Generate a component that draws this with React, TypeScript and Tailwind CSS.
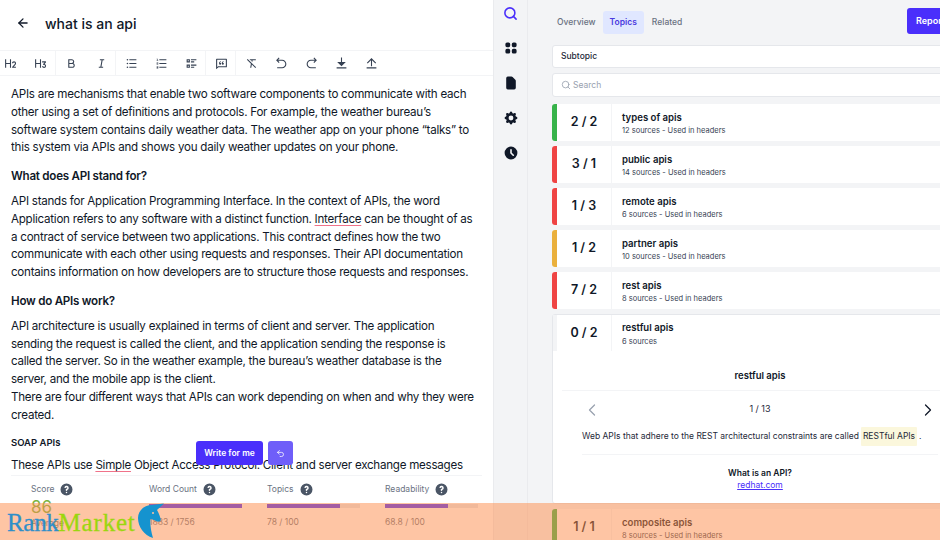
import { ArrowLeft, ChevronLeft, ChevronRight, Search, Undo2 } from 'lucide-react';
import { HiClock, HiCog, HiDocument, HiQuestionMarkCircle, HiViewGrid } from 'react-icons/hi';
import {
  RiArrowGoBackLine,
  RiArrowGoForwardLine,
  RiBold,
  RiChatQuoteLine,
  RiDownloadFill,
  RiFormatClear,
  RiH2,
  RiH3,
  RiItalic,
  RiListCheck2,
  RiListOrdered,
  RiListUnordered,
  RiUploadLine,
} from 'react-icons/ri';

const topics = [
  { score: '2 / 2', title: 'types of apis', meta: '12 sources - Used in headers', bar: 'bg-[#37b34a]' },
  { score: '3 / 1', title: 'public apis', meta: '14 sources - Used in headers', bar: 'bg-[#ef4444]' },
  { score: '1 / 3', title: 'remote apis', meta: '6 sources - Used in headers', bar: 'bg-[#ef4444]' },
  { score: '1 / 2', title: 'partner apis', meta: '10 sources - Used in headers', bar: 'bg-[#eab03c]' },
  { score: '7 / 2', title: 'rest apis', meta: '8 sources - Used in headers', bar: 'bg-[#ef4444]' },
];

const stats = [
  { label: 'Word Count', value: '1883 / 1756', fill: 'w-full' },
  { label: 'Topics', value: '78 / 100', fill: 'w-[78%]' },
  { label: 'Readability', value: '68.8 / 100', fill: 'w-[68%]' },
];

function TopicRow({ score, title, meta, bar }: { score: string; title: string; meta: string; bar: string }) {
  return (
    <div className="flex h-[37px] shrink-0 overflow-hidden rounded-l-[3px] bg-white">
      <div className={`w-[5px] shrink-0 ${bar}`} />
      <div className="flex w-[55px] shrink-0 items-center justify-center border-r border-gray-100 text-[12.5px] font-semibold text-gray-900">
        {score}
      </div>
      <div className="pl-[10px] pt-[7px]">
        <div className="text-[9.6px] leading-[13px] font-semibold text-gray-900">{title}</div>
        <div className="text-[7.5px] leading-[13px] text-gray-700">{meta}</div>
      </div>
    </div>
  );
}

function Unicorn() {
  return (
    <svg viewBox="5 2 30 37" className="-mt-[2px] ml-[1px] h-[37px] w-[30px]">
      <path
        d="M6 18 C6 10 13 5 20 5 L32 3.5 L25 10 C27 13 28 17 29 20 C28 22 26 22 24 21 C22 20 20 19 18.5 19 C18 25 19 31 21 38 C12 35 6 27 6 18 Z"
        fill="#1593cf"
      />
      <circle cx="21" cy="13" r="1" fill="#fec3a0" />
    </svg>
  );
}

export default function App() {
  return (
    <div className="relative flex h-[540px] w-[940px] overflow-hidden bg-white font-['Inter',sans-serif]">
      {/* Editor */}
      <div className="relative flex w-[493px] shrink-0 flex-col">
        <div className="flex h-[50px] shrink-0 items-center gap-[15px] pb-[4px] pl-[16px]">
          <ArrowLeft className="size-[14px] text-gray-900" strokeWidth={2.2} />
          <h1 className="text-[14px] font-medium text-gray-900">what is an api</h1>
        </div>

        <div className="flex h-[26px] shrink-0 items-center border-y border-gray-100 text-gray-700">
          <div className="flex h-full items-center gap-[17px] border-r border-gray-100 pl-[3.5px] pr-[8.5px]">
            <RiH2 className="size-[13px]" />
            <RiH3 className="size-[13px]" />
          </div>
          <div className="flex h-full items-center gap-[17px] border-r border-gray-100 pl-[8.5px] pr-[7.5px]">
            <RiBold className="size-[13px]" />
            <RiItalic className="size-[13px]" />
          </div>
          <div className="flex h-full items-center gap-[17px] border-r border-gray-100 pl-[8.5px] pr-[7.5px]">
            <RiListUnordered className="size-[13px]" />
            <RiListOrdered className="size-[13px]" />
            <RiListCheck2 className="size-[13px]" />
          </div>
          <div className="flex h-full items-center border-r border-gray-100 pl-[8.5px] pr-[7.5px]">
            <RiChatQuoteLine className="size-[13px]" />
          </div>
          <div className="flex h-full items-center gap-[17px] pl-[8.5px]">
            <RiFormatClear className="size-[13px]" />
            <RiArrowGoBackLine className="size-[13px]" />
            <RiArrowGoForwardLine className="size-[13px]" />
            <RiDownloadFill className="size-[13px]" />
            <RiUploadLine className="size-[13px]" />
          </div>
        </div>

        <div className="ml-[11px] mr-[16px] flex-1 overflow-hidden pt-[10px] text-[11.6px] leading-[17.8px] tracking-[-0.25px] text-gray-900">
          <p>
            APIs are mechanisms that enable two software components to communicate with each other using a set of
            definitions and protocols. For example, the weather bureau’s software system contains daily weather data.
            The weather app on your phone “talks” to this system via APIs and shows you daily weather updates on your
            phone.
          </p>
          <h2 className="mt-[11px] font-semibold">What does API stand for?</h2>
          <p className="mt-[7px]">
            API stands for Application Programming Interface. In the context of APIs, the word Application refers to any
            software with a distinct function.{' '}
            <span className="underline decoration-[#f0728a] underline-offset-2">Interface</span> can be thought of as a
            contract of service between two applications. This contract defines how the two communicate with each other
            using requests and responses. Their API documentation contains information on how developers are to structure
            those requests and responses.
          </p>
          <h2 className="mt-[11px] font-semibold">How do APIs work?</h2>
          <p className="mt-[7px]">
            API architecture is usually explained in terms of client and server. The application sending the request is
            called the client, and the application sending the response is called the server. So in the weather example,
            the bureau’s weather database is the server, and the mobile app is the client.
          </p>
          <p>There are four different ways that APIs can work depending on when and why they were created.</p>
          <h3 className="mt-[9px] text-[9.5px] font-semibold tracking-normal">SOAP APIs</h3>
          <p className="mt-[6px]">
            These APIs use <span className="underline decoration-[#f0728a] underline-offset-2">Simple</span> Object Access
            Protocol. Client and server exchange messages
          </p>
        </div>

        <div className="absolute left-[196px] top-[441px] flex gap-[5px]">
          <button className="h-[24px] w-[67px] rounded-[3px] bg-[#4a2ffb] text-[8.5px] font-semibold text-white">
            Write for me
          </button>
          <button className="flex h-[24px] w-[25px] items-center justify-center rounded-[3px] bg-[#6f5ef9] text-white">
            <Undo2 className="size-[9px]" />
          </button>
        </div>

        <div className="mx-[11px] flex h-[65px] shrink-0 gap-[25px] border-t border-gray-100 bg-white pl-[20px] pt-[6px] text-[8.5px] text-gray-500">
          <div className="w-[93px]">
            <div className="flex items-center gap-[5px]">
              Score <HiQuestionMarkCircle className="size-[15px] text-gray-600" />
            </div>
            <div className="mt-[1px] text-[17px] leading-[18px] text-[#7cb342]">86</div>
            <div className="pt-[1px]">Average</div>
          </div>
          {stats.map((s) => (
            <div key={s.label} className="w-[93px]">
              <div className="flex items-center gap-[5px]">
                {s.label} <HiQuestionMarkCircle className="size-[15px] text-gray-600" />
              </div>
              <div className="mt-[7px] h-[3.5px] w-full bg-gray-200">
                <div className={`h-full bg-[#4a2ffb] ${s.fill}`} />
              </div>
              <div className="mt-[8px]">{s.value}</div>
            </div>
          ))}
        </div>
      </div>

      {/* Rail */}
      <div className="flex w-[35px] shrink-0 flex-col items-center gap-[19px] border-x border-gray-200/70 bg-[#f3f4f6] pt-[6px]">
        <Search className="size-[15px] text-[#4a2ffb]" strokeWidth={2.5} />
        <HiViewGrid className="size-[16px] text-gray-900" />
        <HiDocument className="size-[16px] text-gray-900" />
        <HiCog className="size-[16px] text-gray-900" />
        <HiClock className="size-[16px] text-gray-900" />
      </div>

      {/* Topics */}
      <div className="flex min-w-0 flex-1 flex-col overflow-hidden bg-[#f3f4f6] pl-[24px]">
        <div className="w-[416px]">
          <div className="flex h-[45px] shrink-0 items-start justify-between pt-[8px]">
            <div className="flex items-center pt-[3px] text-[8.5px] font-medium text-gray-500">
              <span className="px-[5px] py-[5px]">Overview</span>
              <span className="ml-[2px] rounded-[3px] bg-[#e0e7ff] px-[7px] py-[5px] font-semibold text-[#4a3ae0]">Topics</span>
              <span className="ml-[1px] px-[7px] py-[5px]">Related</span>
            </div>
            <button className="h-[26px] w-[61px] rounded-[3px] bg-[#4a2ffb] pr-[14px] text-[9px] font-semibold text-white">
              Report
            </button>
          </div>

          <div className="flex h-[23px] items-center rounded-[3px] border border-gray-200 bg-white pl-[8px] text-[8.5px] font-medium text-gray-800">
            Subtopic
          </div>
          <div className="mt-[5px] flex h-[24px] items-center gap-[2px] rounded-[3px] border border-gray-200 bg-white pl-[8px] text-[8.5px] text-gray-400">
            <Search className="size-[10px]" /> Search
          </div>

          <div className="mt-[7px] flex flex-col gap-[5px]">
            {topics.map((t) => (
              <TopicRow key={t.title} {...t} />
            ))}

            <div className="h-[190px] shrink-0 rounded-[3px] border border-gray-200 bg-white">
              <div className="flex h-[36px]">
                <div className="w-[4px] shrink-0 bg-[#f3f4f6]" />
                <div className="flex w-[55px] shrink-0 items-center justify-center border-r border-gray-100 text-[12.5px] font-semibold text-gray-900">
                  0 / 2
                </div>
                <div className="pl-[10px] pt-[6px]">
                  <div className="text-[9.6px] leading-[14px] font-semibold text-gray-900">restful apis</div>
                  <div className="text-[7.5px] leading-[13px] text-gray-700">6 sources</div>
                </div>
              </div>
              <div className="ml-[9px] mr-[9px] mt-[18px] border-b border-gray-100 pb-[7px] text-center text-[9.5px] font-semibold text-gray-900">
                restful apis
              </div>
              <div className="relative mx-[29px] mt-[12px] border-b border-gray-100 pb-[8px]">
                <ChevronLeft className="absolute left-0 top-[-3px] size-[20px] text-gray-400" strokeWidth={1.5} />
                <ChevronRight className="absolute right-0 top-[-3px] size-[20px] text-gray-900" strokeWidth={1.5} />
                <div className="text-center text-[9px] leading-[12px] text-gray-800">1 / 13</div>
                <div className="mt-[12px] flex items-center text-[8.5px] text-gray-800">
                  Web APIs that adhere to the REST architectural constraints are called
                  <span className="mx-[2px] rounded-[1px] bg-[#fbf7dc] px-[2px] py-[3px]">RESTful APIs</span>.
                </div>
              </div>
              <div className="mt-[12px] text-center text-[8.5px] font-semibold leading-[12px] text-gray-900">What is an API?</div>
              <div className="text-center text-[8.5px] leading-[13px] text-[#4a2ffb] underline">redhat.com</div>
            </div>

            <TopicRow score="1 / 1" title="composite apis" meta="8 sources - Used in headers" bar="bg-[#37b34a]" />
          </div>
        </div>
      </div>

      {/* Orange band and logo over the page */}
      <div className="pointer-events-none absolute bottom-0 left-0 right-0 h-[37px] bg-[#fd8c4a]/50" />
      <div className="pointer-events-none absolute left-[7px] top-[504px] flex items-start">
        <span className="font-['Liberation_Serif',serif] text-[25px] leading-[37px] tracking-[-0.3px] text-[#2e8fc9] [-webkit-text-stroke:0.3px_#2e8fc9]">Rank</span>
        <span className="font-['Liberation_Serif',serif] text-[25px] leading-[37px] tracking-[0.8px] text-[#9bd60f] [-webkit-text-stroke:0.3px_#9bd60f]">Market</span>
        <Unicorn />
      </div>
    </div>
  );
}
